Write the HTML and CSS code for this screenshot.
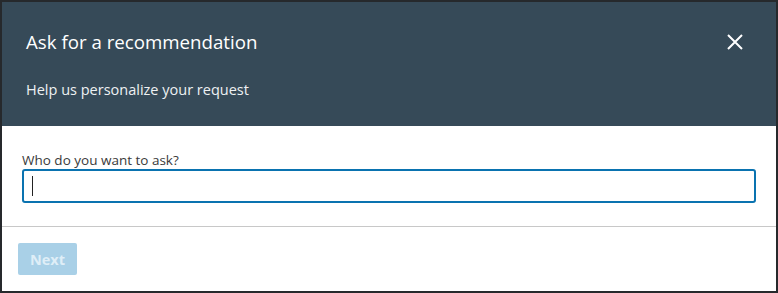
FILE: index.html
```html
<!DOCTYPE html>
<html>
<head>
<meta charset="utf-8">
<link rel="stylesheet" href="styles.css">
</head>
<body>
<div class="modal">
  <header class="modal-header">
    <div class="title-row">
      <h2 class="title">Ask for a recommendation</h2>
      <button class="close" aria-label="Dismiss">
        <svg width="18" height="18" viewBox="0 0 18 18"><path d="M2 2 L16 16 M16 2 L2 16" stroke="#fff" stroke-width="2" fill="none"/></svg>
      </button>
    </div>
    <p class="subtitle">Help us personalize your request</p>
  </header>
  <section class="modal-body">
    <label class="label" for="who">Who do you want to ask?</label>
    <div class="input"><span class="caret"></span></div>
  </section>
  <footer class="modal-footer">
    <button class="next" disabled>Next</button>
  </footer>
</div>
</body>
</html>
```

FILE: styles.css
```css
html, body {
  margin: 0;
  padding: 0;
  background: #26292c;
  height: 293px;
  overflow: hidden;
}
body {
  padding: 2px;
  box-sizing: border-box;
  font-family: "Open Sans", "Noto Sans", sans-serif;
}
.modal {
  background: #fff;
  height: 289px;
  display: flex;
  flex-direction: column;
}
.modal-header {
  flex-shrink: 0;
  background: #364a58;
  color: #fff;
  height: 124px;
  box-sizing: border-box;
  padding: 26px 24px 0 24px;
}
.title-row {
  display: flex;
  justify-content: space-between;
  align-items: center;
  height: 28px;
}
.title {
  margin: 0;
  font-weight: 400;
  font-size: 18.7px;
  line-height: 28px;
}
.close {
  background: none;
  border: 0;
  padding: 0;
  width: 18px;
  height: 18px;
  margin-right: 8px;
  display: flex;
}
.subtitle {
  margin: 0;
  margin-top: 24px;
  font-size: 14.5px;
  line-height: 20px;
  color: #eef1f3;
}
.modal-body {
  flex-shrink: 0;
  padding: 26px 20px 23px 20px;
  border-bottom: 1px solid #c8c8c8;
  display: flex;
  flex-direction: column;
}
.label {
  font-size: 13.5px;
  line-height: 16px;
  color: #3a3a3a;
}
.input {
  margin-top: 1px;
  height: 34px;
  box-sizing: border-box;
  border: 2px solid #0a73b0;
  border-radius: 3px;
  display: flex;
  align-items: center;
  padding-left: 8px;
}
.caret {
  width: 1px;
  height: 20px;
  background: #222;
}
.modal-footer {
  padding: 16px 16px 0 16px;
}
.next {
  background: #a9d0e7;
  color: #dfeef7;
  border: 0;
  border-radius: 2px;
  font-family: "Open Sans", "Noto Sans", sans-serif;
  font-weight: 700;
  font-size: 14.5px;
  width: 59px;
  height: 32px;
  padding: 0;
}
```
